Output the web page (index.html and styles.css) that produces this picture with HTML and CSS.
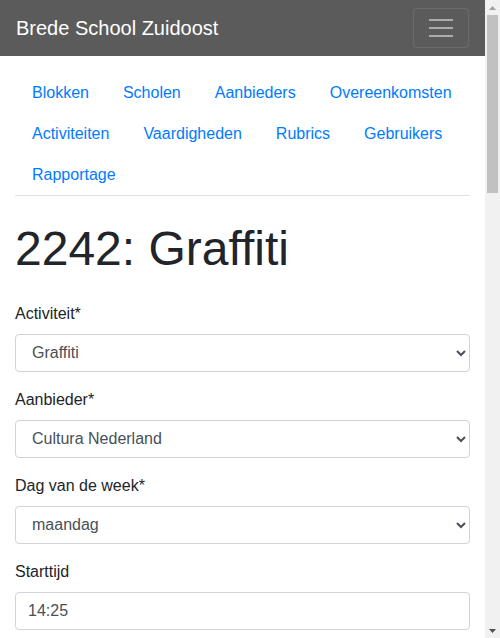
FILE: index.html
```html
<!DOCTYPE html>
<html lang="nl">
<head>
<meta charset="utf-8">
<title>2242: Graffiti</title>
<link rel="stylesheet" href="styles.css">
</head>
<body>
<div class="page">
  <nav class="navbar">
    <a class="brand" href="#">Brede School Zuidoost</a>
    <button class="toggler" type="button" aria-label="Menu">
      <span class="bar"></span><span class="bar"></span><span class="bar"></span>
    </button>
  </nav>
  <div class="container">
    <ul class="nav">
      <li><a href="#">Blokken</a></li>
      <li><a href="#">Scholen</a></li>
      <li><a href="#">Aanbieders</a></li>
      <li><a href="#">Overeenkomsten</a></li>
      <li><a href="#">Activiteiten</a></li>
      <li><a href="#">Vaardigheden</a></li>
      <li><a href="#">Rubrics</a></li>
      <li><a href="#">Gebruikers</a></li>
      <li><a href="#">Rapportage</a></li>
    </ul>
    <h1 class="title">2242: Graffiti</h1>
    <form class="form">
      <div class="group">
        <label>Activiteit*</label>
        <select class="control"><option>Graffiti</option></select>
      </div>
      <div class="group">
        <label>Aanbieder*</label>
        <select class="control"><option>Cultura Nederland</option></select>
      </div>
      <div class="group">
        <label>Dag van de week*</label>
        <select class="control"><option>maandag</option></select>
      </div>
      <div class="group">
        <label>Starttijd</label>
        <input class="control" type="text" value="14:25">
      </div>
    </form>
  </div>
</div>
<div class="scrollbar" aria-hidden="true">
  <div class="sb-btn">
    <svg width="7" height="4" viewBox="0 0 7 4"><path d="M0 4L3.5 0L7 4z" fill="#a3a3a3"/></svg>
  </div>
  <div class="sb-track">
    <div class="sb-thumb"></div>
  </div>
  <div class="sb-btn">
    <svg width="7" height="4" viewBox="0 0 7 4"><path d="M0 0L3.5 4L7 0z" fill="#505050"/></svg>
  </div>
</div>
</body>
</html>
```
FILE: styles.css
```css
html, body {
  margin: 0;
  padding: 0;
  height: 100%;
  overflow: hidden;
}
body {
  font-family: "Liberation Sans", Arial, sans-serif;
  font-size: 16px;
  line-height: 1.5;
  color: #212529;
  background: #fff;
  display: flex;
}
.page {
  flex: 1;
  min-width: 0;
}
.scrollbar {
  width: 15px;
  flex: none;
  background: #f1f1f1;
  display: flex;
  flex-direction: column;
}
.sb-btn {
  height: 15px;
  display: flex;
  align-items: center;
  justify-content: center;
}
.sb-btn svg {
  display: block;
}
.sb-track {
  flex: 1;
}
.sb-thumb {
  height: 178px;
  margin: 0 2px;
  background: #c1c1c1;
}
.navbar {
  height: 56px;
  box-sizing: border-box;
  background: #5b5b5b;
  display: flex;
  align-items: center;
  justify-content: space-between;
  padding: 8px 16px;
}
.brand {
  color: #fff;
  font-size: 20px;
  line-height: 30px;
  text-decoration: none;
}
.toggler {
  width: 56px;
  height: 40px;
  box-sizing: border-box;
  background: transparent;
  border: 1px solid rgba(255, 255, 255, 0.1);
  border-radius: 4px;
  display: flex;
  flex-direction: column;
  align-items: center;
  justify-content: center;
  gap: 6px;
  padding: 0;
}
.toggler .bar {
  display: block;
  width: 24px;
  height: 2px;
  background: rgba(255, 255, 255, 0.5);
}
.container {
  padding: 0 15px;
}
.nav {
  list-style: none;
  margin: 16px 0 0;
  padding: 0;
  display: flex;
  flex-wrap: wrap;
  border-bottom: 1px solid #dee2e6;
}
.nav a {
  display: block;
  padding: 8px 17px;
  line-height: 25px;
  color: #007bff;
  text-decoration: none;
}
.title {
  font-size: 48px;
  font-weight: 400;
  line-height: 1.2;
  margin: 24px 0 24px;
}
.group {
  margin-bottom: 16px;
}
label {
  display: block;
  margin-bottom: 8px;
}
.control {
  display: block;
  width: 100%;
  height: 38px;
  box-sizing: border-box;
  padding: 6px 12px;
  font-family: inherit;
  font-size: 16px;
  line-height: 1.5;
  color: #495057;
  background: #fff;
  border: 1px solid #ced4da;
  border-radius: 4px;
  margin: 0;
}
```
